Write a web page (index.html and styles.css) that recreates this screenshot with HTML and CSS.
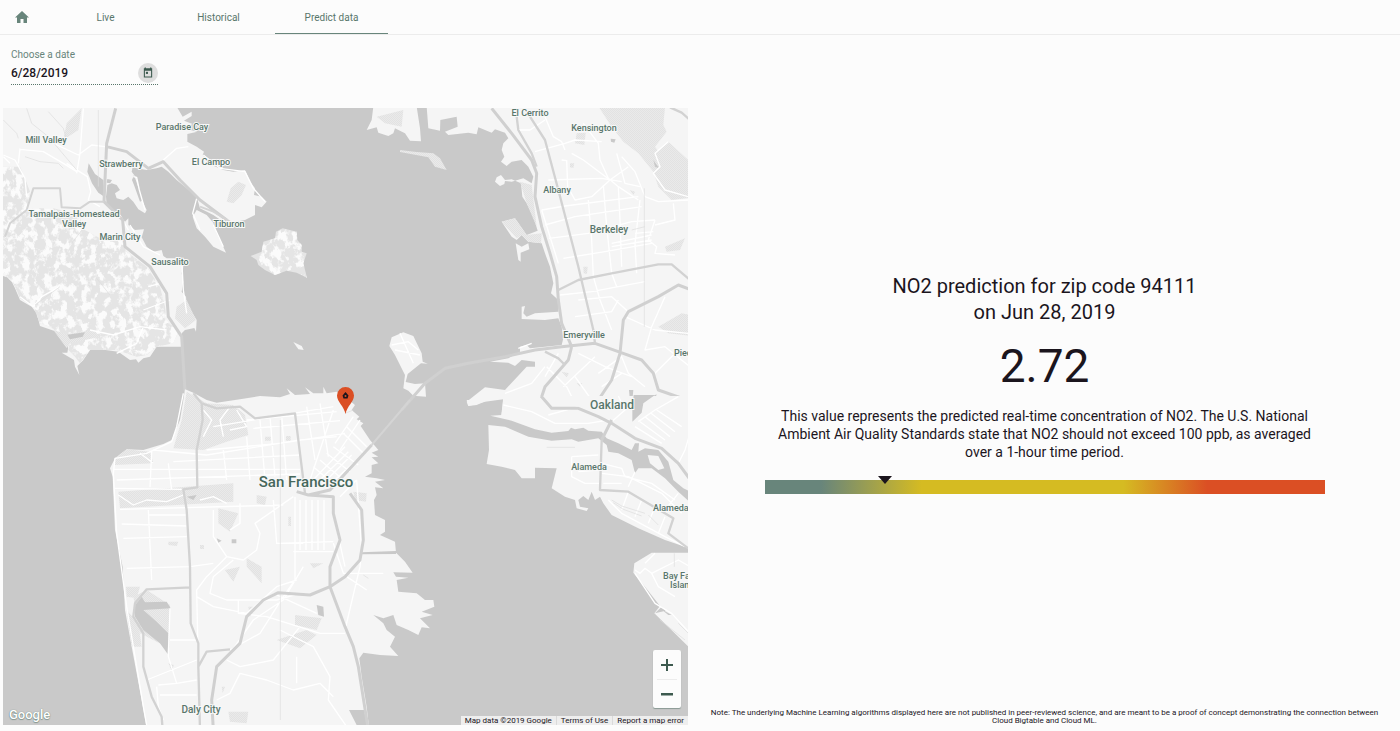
FILE: index.html
```html
<!DOCTYPE html>
<html lang="en">
<head>
<meta charset="utf-8">
<meta name="viewport" content="width=device-width, initial-scale=1">
<title>Predict data</title>
<link rel="stylesheet" href="styles.css">
</head>
<body>
<header class="topbar">
  <nav class="tabs" aria-label="Main">
    <a class="home" href="#home" aria-label="Home"><svg viewBox="0 0 14 12" aria-hidden="true"><path d="M7 0 0 6.500h2V12h3.500V8h3v4H12V6.500h2z"/></svg></a>
    <a class="tab" href="#live">Live</a>
    <a class="tab" href="#historical">Historical</a>
    <a class="tab tab-active" href="#predict" aria-current="page">Predict data</a>
  </nav>
</header>
<form class="date-form">
  <label class="date-label" for="date">Choose a date</label>
  <div class="date-row">
    <input class="date-input" id="date" type="text" value="6/28/2019">
    <button class="date-button" type="button" aria-label="Open calendar"><svg viewBox="0 0 12 12" aria-hidden="true"><path fill-rule="evenodd" d="M1 1h1V0h1.500v1h5V0H10v1h1v11H1zM2.300 4v6.700h7.400V4z"/><path d="M3.500 5.200h2.500v2.500H3.500z"/></svg></button>
  </div>
</form>
<main class="content">
  <section class="map" aria-label="Map of the San Francisco Bay Area">
    <svg class="map-canvas" viewBox="3 108 685 617" role="img" aria-label="San Francisco Bay Area">
      <defs>
        <pattern id="dots" width="6" height="6" patternUnits="userSpaceOnUse"><path fill="#e2e2e2" d="M0 0h6v6H0z"/><path fill="#eaeaea" d="M0 0h3v3H0zM3 3h3v3H3z"/></pattern>
        <filter id="relief" x="0" y="0" width="100%" height="100%">
          <feTurbulence type="fractalNoise" baseFrequency=".045 .038" numOctaves="4" seed="8"/>
          <feColorMatrix values="0 0 0 0 .96  0 0 0 0 .96  0 0 0 0 .96  0 7 0 0 -3.300"/>
          <feComposite in2="SourceGraphic" operator="in" result="ridges"/>
          <feMerge><feMergeNode in="SourceGraphic"/><feMergeNode in="ridges"/></feMerge>
        </filter>
      </defs>
      <path class="water" d="M3 108h685v617H3z"/>
      <g transform="scale(.333333)">
        <!-- Marin -->
        <g transform="translate(0 300)">
          <path class="land" d="M0 20H530L548 50 575 35 575 48 552 62 578 72 552 85 592 95 562 102 562 125 590 140 612 155 608 165 635 195 670 210 700 215 735 210 750 245 765 265 762 285 785 290 800 305 785 322 765 315 765 345 735 360 690 368 665 362 640 345 600 325 590 290 560 265 530 240 505 215 485 200 470 205 440 210 410 205 398 200 395 215 410 235 418 270 430 310 440 330 435 340 415 328 400 305 385 290 370 300 350 295 345 280 360 270 350 255 335 250 322 255 318 290 320 315 340 330 360 345 375 365 385 355 385 375 405 390 432 388 425 412 440 440 460 455 485 450 490 468 500 475 545 475 550 500 545 520 550 545 545 575 558 590 560 615 575 635 590 660 588 695 583 684 555 690 545 700 545 740 470 740 450 770 430 775 415 788 408 778 390 780 355 755 300 748 270 750 250 780 232 798 238 825 225 800 222 780 185 758 202 758 205 740 195 715 170 695 120 678 110 640 95 620 60 600 45 565 30 535 0 525z"/>
          <path class="relief" d="M9 200 60 200 75 235 90 275 80 325 160 325 240 345 245 385 300 415 365 420 380 455 440 500 480 560 495 620 500 660 535 695 520 730 470 740 440 765 410 770 350 750 270 750 240 790 225 770 205 750 200 715 150 680 120 670 100 620 60 595 40 550 9 520z"/>
          <path class="park" d="M715 245 738 255 725 285 700 310 680 305 692 265zM200 703 160 690 200 745 210 730 300 710 280 690zM560 600 588 660 555 685 525 655 530 620zM200 70 245 25 235 90 190 120z"/>
          <path class="water" d="M266 190 285 222 310 240 313 290 295 278 276 250 262 215zM202 704 255 697 248 710 210 718zM322 237 336 240 330 250 320 248zM402 225 415 262 430 300 420 305 402 255 396 240z"/>
          <path class="land" d="M590 330 620 345 640 368 650 400 665 430 678 458 640 440 615 410 590 385 578 350z"/>
          <path class="relief" d="M848 385 890 395 892 420 905 435 905 455 920 460 910 490 921 533 890 518 860 512 825 525 795 510 775 495 770 480 752 468 785 455 790 425 825 415 828 395z"/>
          <path class="land" d="M880 726 905 738 911 750 895 748z"/>
          <path class="street" d="M10 165 45 180 75 235 80 290M60 145 55 190M60 148 130 155 190 190 230 215M150 125 235 165 275 135 315 140M230 220 240 160 250 25M200 190 262 230 272 275 265 300 300 320M10 170 30 190M490 180 530 145 565 140M610 165 660 205 735 215 760 265 795 305M640 375 670 440M590 295 578 340 600 390M400 230 410 232 418 270 435 330M390 375 430 440 480 465M545 475 550 570 560 640M360 345 385 390M60 590 100 620 125 590 180 560M270 690 340 705 420 680 500 690M430 630 510 600M445 560 480 550 500 590M350 760 410 730 430 680"/>
          <path class="minor-road" d="M80 25 95 70 145 110 230 210M10 60 50 100 55 115M75 170 120 185 175 190 190 205M145 35 190 85 200 120M215 430 250 385M290 535 330 585M105 615 180 560M295 30V260"/>
          <path class="highway" d="M347 25 320 130 312 305 368 360 375 440 450 500 500 580 505 650 545 710 555 870 600 900M320 140 380 155 445 205 490 185 540 240 600 300 680 360"/>
          <path class="road" d="M312 305 270 305 240 325 185 322 180 265 100 265 80 330 30 370 15 410M600 320 640 335 690 365"/>
        </g>
        <!-- East Bay, north -->
        <g transform="translate(1035 300)">
          <path class="land" d="M85 20 80 60 65 90 95 82 100 98 130 108 145 100 150 85 180 100 195 122 228 124 225 85 215 20zM245 20 250 85 285 92 286 60 335 50 338 80 300 95 310 105 370 98 395 103 400 82 440 98 450 88 480 98 490 115 475 130 470 150 478 170 468 185 485 198 500 185 530 180 550 200 565 230 560 250 535 235 500 245 480 243 478 252 465 258 450 245 455 232 468 225 480 240 500 238 528 250 532 290 545 310 565 350 578 392 545 405 510 355 470 365 500 410 515 420 530 405 550 425 590 430 600 460 615 500 625 550 618 580 640 600 640 635 570 640 545 650 535 640 540 618 530 620 530 657 600 660 640 655 650 680 655 715 650 735 600 740 555 745 545 735 525 740 525 755 490 775 435 785 490 788 510 798 530 780 570 785 570 800 545 800 480 870 420 862 365 905 370 918 420 905 475 898 468 950H1060V20z"/>
          <path class="land" d="M512 430 530 440 550 430 553 448 527 458 527 485 520 480z"/>
          <path class="park" d="M762 22H960L955 75 965 95 930 140 980 210 1060 245V290L980 300 940 260 925 215 880 160 835 125 800 80zM970 125 1030 180V250L965 220 930 160zM470 365 510 355 545 405 590 400 588 430 550 425 530 405 515 415zM525 245 560 255 575 380 545 310zM165 150 215 156 265 160 285 175 305 210 270 200 250 172 165 156zM95 50 175 30 170 80 120 70zM695 100 722 98 718 135 690 130zM940 680 1010 640 1060 650V710L970 700zM650 815 672 820 665 832zM695 850 712 850 705 860zM715 500 728 500 726 522 716 520zM675 190 688 190 685 204 675 202zM960 440 1020 415 1005 450 965 455zM855 270 870 275 865 285z"/>
          <path class="water" d="M797 116 812 118 808 128 798 125zM925 180 942 205 930 200zM852 870 865 870 862 900 855 905zM870 905 900 900 935 883 925 915 895 940H865z"/>
          <path class="land" d="M175 697 205 708 230 760 233 785 248 791 228 790 188 822 182 846 210 852 240 850 243 890 205 887 190 872 175 865 180 825 150 765 133 738 140 712z"/>
          <path class="street" d="M600 50 625 110 650 125 660 150M570 155 660 130 690 120 770 125M665 180 668 260 690 300 740 290 795 240 850 200M610 240 770 235 830 245M715 70 760 130 765 180 790 235 820 260 880 300M590 330 660 318 880 290M600 375 690 350 890 320M612 415 730 400 860 365 930 360M655 475 780 455 920 430M645 585 740 575 900 545M640 490 590 330M730 300 740 420 745 530 765 600 800 690M775 255 785 380 800 520 815 560M820 260 825 360 830 500M885 300 870 430 875 520M795 240 715 180 680 160M600 60 555 90 520 90M815 160 840 250 885 260M830 170 870 215 900 290 940 305 1030 300M930 360 910 420 935 440 930 460 990 465M800 430 920 405M800 440 920 420M870 400 925 395M985 310 990 360 930 375M970 125 930 160 945 200 925 220 960 270 1030 290M700 600 800 590 850 635M840 650 930 690 1030 700M760 820 830 770 850 820 900 860M700 760 780 800 860 830M690 830 740 900M770 860 830 820M960 590 920 680 900 750 960 740 1035 800M930 820 1000 750M600 830 640 760M655 860 750 770M605 800 665 860 700 930M480 880 560 850 600 800M690 650 800 635 820 600M650 180 665 182M520 745 560 730M140 735 190 725 220 750M150 750 225 765M165 700 205 790"/>
          <path class="minor-road" d="M898 265V680M860 390 900 380"/>
          <path class="highway" d="M440 25 500 100 560 180 575 220 570 290 590 380 615 460 635 530 640 600 650 670 680 740M170 930 240 850 300 805 370 790 480 770 570 750 650 740 750 730 820 755 890 780 925 820 940 870 1040 905M1040 570 1000 555 940 590 850 635 835 660 825 760 800 840 760 900M680 740 670 780 600 860 590 890 620 930"/>
          <path class="road strong" d="M515 50 520 90 560 160 575 200M555 50 600 120 640 270 700 500 745 690 750 730M640 570 700 540 800 520 940 493 980 493 1035 540M600 755 640 775 660 795M975 22 1010 38 1035 60"/>
        </g>
        <!-- Oakland and Alameda -->
        <g transform="translate(1035 1200)">
          <path class="land" d="M475-12 470 45 436 47 500 62 570 88 620 98 670 93 678 83 690 88 715 83 730 92 770 95 785 115 820 130 860 150 870 130 882 130 880 155 900 145 940 150 970 185 985 240 1015 265 1060 285V-12z"/>
          <path class="land" d="M430 75 480 80 550 110 620 122 680 118 700 125 760 115 785 135 790 155 820 160 860 180 870 220 880 205 920 205 960 235 1000 275 1060 330V450L1020 440 960 420 880 385 800 345 775 310 765 290 750 300 740 275 730 300 715 288 700 300 705 320 730 325 725 333 695 325 690 300 660 290 620 265 635 205 570 203 570 235 530 235 510 210 470 200 425 192 432 150zM908 165 940 168 958 205 940 210 915 190zM920 458H1060V770L1000 710 928 640 945 618 900 560 865 518 868 490zM365 0 370 18 395 15 430 0z"/>
          <path class="water" d="M866-15 930-15 895 10 890 38 862 65 862 30zM930 640 950 620 962 632zM945 625 980 645 970 645z"/>
          <path class="street" d="M475 15 560 35 630 70 730 70 790 60M610 45 700 20M820-12 840 30 800 65M880 65 930 30 1000-10M870 80 950 130M885 65 960 120M900 50 975 110M918 40 990 95M935 30 1010 80M1000 190 1020 150 1035 100M680 170 680 230 720 250 765 250M680 170 760 165M700 215 760 210M770 190 830 205 840 230 920 250 990 300M770 220 850 230 950 280 1010 340M775 250 830 250M790 300 830 340 960 410 1020 440M850 275 830 330M890 300 870 350M930 320 910 370M960 350 940 400M870 215 850 260M1000 280 960 330M870 510 885 520 900 505 920 520 1000 480 1035 500M870 520 930 610 980 640 1035 700M920 520 940 560 990 590M930 460 900 490"/>
          <path class="minor-road" d="M605 142H690M800 300 830 318 900 340M805 308 835 328 890 348M910 345 940 375M988 460V500M945 660 1020 720M1000 670 1030 700"/>
          <path class="highway" d="M588-12 620 25 700 25 760 50 800 70 870 115 950 145 1000 190 1040 245M800 60 770 120"/>
          <path class="road strong" d="M770 120 765 270 850 275 985 355 970 400 1030 445"/>
        </g>
        <!-- San Francisco -->
        <g transform="translate(0 1200)">
          <path class="land" d="M555-32 580-22 620 0 650 8 720-2 780-12 840-8 870-18 860-35 885-15 930-18 915-38 940-20 970-20 970-40 980-20 1010-25 1035-10 1065 15 1055 30 1078 50 1070 58 1090 70 1082 78 1110 120 1135 150 1115 158 1135 170 1115 172 1135 190 1115 195 1115 220 1095 230 1130 235 1155 240 1125 245 1150 265 1125 262 1130 285 1122 300 1125 345 1155 360 1155 395 1140 405 1185 425 1188 458 1195 465 1215 485 1238 518 1180 517 1188 530 1225 533 1190 540 1195 575 1250 580 1275 600 1300 600 1303 620 1265 635 1298 645 1260 655 1290 685 1265 682 1255 705 1225 690 1190 675 1180 645 1150 655 1120 645 1150 670 1160 690 1185 710 1170 740 1195 768 1140 765 1090 758 1078 775 1085 830 1100 920 1108 990H441L425 900 395 740 375 630 368 500 345 390 338 230 330 205 345 175 380 148 430 150 490 132 515 120 540 60 550 0z"/>
          <path class="park" d="M560-25 620 10 700 15 735 45 745 105 680 125 610 150 520 145 545 60zM355 275 700 250 700 305 360 325zM345 175 380 148 450 155 460 190 345 195zM400 590 440 570 510 615 508 745 420 700zM380 630 415 670 425 740 395 740zM378 560 420 560 410 595 380 590zM655 325 715 340 690 395 655 370zM740 475 785 500 785 550 740 500zM885 645 965 655 950 690 885 675zM830 720 920 690 950 705 900 745zM770 285 800 290 795 315 770 310zM675 510 720 500 700 545zM795 110 812 110 812 122 795 122zM858 108 872 108 872 122 858 122zM865 350 873 350 873 378 865 378zM930 490 970 490 940 505zM505 790 522 795 515 812zM1060 275 1100 280 1098 305 1065 300zM685 935 745 935 740 970 690 965zM745 620 770 620 750 650zM665 860 675 860 668 880zM505 425 535 425 530 438 505 435zM600 435 612 435 612 447 600 447z"/>
          <path class="water" d="M425 590 435 607 500 605 512 625 430 630 470 665 505 700 503 762 480 730 430 690 405 650 402 620zM650 415 665 422 655 428zM695 418 709 418 709 430 695 430zM950 615 970 620 972 650 955 645zM1085 457 1188 453 1188 462 1085 463zM1047 930 1092 930 1104 985 1075 985zM560 290 590 285 580 300z"/>
          <path class="street" d="M340 208 900 208M350 240 900 222M345 265 545 268M460 150 620 165 900 120 1010 110M520 185 900 165M620 150 840 130 1035 100M640 80 1000 20M740 60 1010 35M760 85 1020 62M360 328 850 315M365 372 560 378M370 415 560 410M380 505 570 500 640 490M445 330 455 540M445 345 560 345M505 190 515 270M455 155 450 262M670 150 680 240M740 110 750 240M780 60 795 240M810 50 825 230M845 45 860 240M920 20 945 180M960 10 985 170M1000 30 930 240M550-20 530 80 515 125 440 160 345 175 340 220 350 400 380 620 430 920 440 975M640 330 640 410 680 470 620 530 590 570 595 800M680 470 730 480 770 450 780 400 765 370 880 290M820 300 830 430 910 430M885 290V540L850 590 780 700 690 750M900 300V450M918 300V450M936 300V450M954 300V450M972 300V450M830 430 1000 425M880 455H1000M720 310 720 370 690 390M590 590 640 620 740 640 830 560 890 540M700 480 640 530 630 580 680 600 830 600 900 580M690 760 760 660 850 600 910 500M715 600 715 640 800 650 960 700 1035 700M820 580 950 640M840 690 940 740 990 830 985 900 1040 980M680 780 720 800 820 780 900 680M650 900 690 880 720 820 800 840 880 870 960 850 1000 890M890 770 890 850M510 720 590 720M510 625 505 770 530 850M440 840 590 780M475 855 530 850 590 840M470 860 475 920 490 960M480 885 590 885M1070 240 1085 450 1080 500 1035 690M1000 340 1035 500M1000 430 1030 520 1150 520M1040 530 1100 570M1020 290 1070 240M930 250 1035 140M950 250 1045 155M965 255 1055 165M980 262 1070 180M940 200 1010 260M960 180 1030 240M980 160 1050 215M1000 140 1075 195M1030 100 1090 160M1040 80 1100 140M1020 150 1080 60M1005 130 1060 50M610 30 635 60 610 110M690 20 660 60 670 110M710 30 740 80 690 90M355 285 400 315 440 300 500 305 550 285M600 300 640 290 680 310M420 160 460 190"/>
          <path class="minor-road" d="M841 60V960M1035 40 1060 30M1090 525 1105 535"/>
          <path class="road strong" d="M580-20 605 10 608 60 590 150 592 262 550 268 560 330 570 500 572 670 595 730 595 800 600 990M605 10 650 25 720 20 765 55 885 40 915 280M572 562 440 568 405 610 400 650 430 700 430 800 455 890 485 950 488 990M595 800 620 755 690 748"/>
          <path class="highway" d="M890 275 925 285 1000 290 1000 340 1020 420 990 500 990 560 1035 680 1060 740 1075 800 1105 990M640 990 635 900 650 800 720 730 740 650 790 600 835 578 930 585 990 560 1035 530 1080 480 1090 420 1085 330 1050 280M925 285 990 270 1115 135"/>
          <path class="road" d="M1115 135 1230 0"/>
        </g>
      </g>
      <g class="labels">
        <text x="182" y="130">Paradise Cay</text><text x="46" y="143">Mill Valley</text>
        <text x="121" y="167">Strawberry</text><text x="211" y="165">El Campo</text>
        <text x="74" y="217">Tamalpais-Homestead</text><text x="74" y="227">Valley</text>
        <text x="120" y="240">Marin City</text><text x="170" y="265">Sausalito</text><text x="229" y="227">Tiburon</text>
        <text x="530" y="116">El Cerrito</text><text x="594" y="131">Kensington</text><text x="557" y="193">Albany</text>
        <text class="town" x="609" y="233">Berkeley</text><text x="584" y="338">Emeryville</text>
        <text class="city" x="612" y="409">Oakland</text><text x="589" y="470">Alameda</text>
        <text class="town" x="201" y="713">Daly City</text>
        <g class="clipped"><text x="674" y="356">Piedmont</text><text x="653" y="511">Alameda</text><text x="663" y="579">Bay Farm</text><text x="670" y="588">Island</text></g>
        <text class="metro" x="306" y="487">San Francisco</text>
      </g>
      <g class="pin"><path d="M345.500 414C344 406 337 402 337 395.500a8.500 8.500 0 0 1 17 0C354 402 347 406 345.500 414z"/><path class="pin-mark" d="M345.500 392 348.500 395.500 347.500 398.500H343.500L342.500 395.500z"/><circle class="pin-eye" cx="345.500" cy="396" r="1"/></g>
    </svg>
    <span class="google">Google</span>
    <div class="zoom">
      <button class="zoom-button" type="button" aria-label="Zoom in"><svg viewBox="0 0 12 12" aria-hidden="true"><path d="M5 0h2v5h5v2H7v5H5V7H0V5h5z"/></svg></button>
      <button class="zoom-button" type="button" aria-label="Zoom out"><svg viewBox="0 0 12 12" aria-hidden="true"><path d="M0 5h12v2.500H0z"/></svg></button>
    </div>
    <div class="credits"><span>Map data ©2019 Google</span><a href="#terms">Terms of Use</a><a href="#report">Report a map error</a></div>
  </section>
  <section class="panel">
    <div class="prediction">
      <h1 class="title">NO2 prediction for zip code 94111<br>on Jun 28, 2019</h1>
      <p class="value">2.72</p>
      <p class="about">This value represents the predicted real-time concentration of NO2. The U.S. National Ambient Air Quality Standards state that NO2 should not exceed 100 ppb, as averaged over a 1-hour time period.</p>
      <div class="gauge"><span class="marker" style="left:21.500%"></span></div>
    </div>
    <p class="note">Note: The underlying Machine Learning algorithms displayed here are not published in peer-reviewed science, and are meant to be a proof of concept demonstrating the connection between Cloud Bigtable and Cloud ML.</p>
  </section>
</main>
</body>
</html>
```
FILE: styles.css
```css
* { box-sizing: border-box; }
body { margin: 0; min-height: 100vh; background: #fcfcfc; color: #1b151d; font-family: Roboto, "Liberation Sans", sans-serif; }
button { border: 0; padding: 0; cursor: pointer; }

.topbar { border-bottom: 1px solid #ececec; }
.tabs { display: flex; height: 34px; }
.home, .tab { display: flex; align-items: center; justify-content: center; text-decoration: none; color: #58766b; }
.home { width: 49px; padding-right: 5px; }
.home svg { width: 14px; height: 12px; fill: #68857b; }
.tab { width: 113px; padding-top: 2px; font-size: 10px; border-bottom: 1px solid transparent; }
.tab-active { border-bottom-color: #68857b; }

.date-form { width: 147px; margin: 14px 0 23px 11px; }
.date-label { display: block; font-size: 10px; line-height: 12px; color: #68857b; }
.date-row { display: flex; align-items: center; height: 24px; border-bottom: 1px dotted #58766b; }
.date-input { flex: 1; min-width: 0; border: 0; padding: 0; background: none; font: 500 12px/16px Roboto, sans-serif; color: #1b151d; outline: 0; }
.date-button { display: grid; place-items: center; width: 20px; height: 20px; border-radius: 50%; background: #dedede; }
.date-button svg { width: 10px; height: 11px; fill: #3d5a4f; }

.content { display: grid; grid-template-columns: 685fr 712fr; padding: 0 0 5px 3px; }

.map { position: relative; overflow: hidden; }
.map-canvas { display: block; width: 100%; }
.water { fill: #c9c9c9; }
.land { fill: #f5f5f5; }
.park { fill: url(#dots); }
.relief { fill: #e5e5e5; filter: url(#relief); }
.street, .minor-road, .road, .highway { fill: none; stroke-linejoin: round; }
.street { stroke: #fff; stroke-width: 4px; }
.minor-road { stroke: #dcdcdc; stroke-width: 2px; }
.road { stroke: #d4d4d4; stroke-width: 6px; }
.strong { stroke: #d2d2d2; stroke-width: 7px; }
.highway { stroke: #d0d0d0; stroke-width: 9px; }
.labels { font-size: 9px; font-weight: 500; fill: #58766b; stroke: #f8f8f8; stroke-width: 2px; paint-order: stroke; text-anchor: middle; }
.labels .town { font-size: 10px; }
.labels .city { font-size: 12px; }
.labels .metro { font-size: 15px; fill: #45675b; }
.labels .clipped { text-anchor: start; }
.pin { fill: #db4f24; }
.pin-mark { fill: #1b151d; }
.pin-eye { fill: #db4f24; }

.google { position: absolute; left: 6px; bottom: 2px; font-size: 13px; line-height: 16px; font-weight: 500; color: #fff; text-shadow: 0 0 1px #58766b, 0 1px 1px #8a9a94; }
.zoom { position: absolute; right: 7px; bottom: 17px; width: 28px; background: #fcfcfc; border-radius: 2px; box-shadow: 0 1px 1px #8a9a94; padding: 0 4px; }
.zoom-button { display: grid; place-items: center; width: 100%; height: 29px; background: none; }
.zoom-button + .zoom-button { border-top: 1px solid #ececec; }
.zoom svg { width: 12px; height: 12px; fill: #3d5a4f; }
.credits { position: absolute; right: 0; bottom: 0; display: flex; background: #eee; font-size: 8px; line-height: 9px; }
.credits > * { padding: 0 4px; color: #1b151d; text-decoration: none; }
.credits > * + * { border-left: 1px solid #dadada; }

.panel { display: flex; flex-direction: column; text-align: center; padding: 0 12px 0 13px; }
.prediction { flex: 1; display: flex; flex-direction: column; justify-content: center; width: 100%; max-width: 560px; margin: 0 auto; padding-bottom: 50px; }
.title { margin: 0; font-size: 20px; line-height: 26px; font-weight: 400; }
.value { margin: 14px 0; font-size: 46px; line-height: 54px; }
.about { margin: 0; font-size: 14px; line-height: 18px; }
.gauge { position: relative; height: 14px; margin-top: 19px; background: linear-gradient(90deg, #68857b 10%, #d5bb22 28%, #d5bb22 64%, #db4f24 79%); }
.marker { position: absolute; top: -4px; margin-left: -7px; border: solid transparent; border-width: 8px 7px 0; border-top-color: #1b151d; }
.note { margin: 0; font-size: 8px; line-height: 8px; }
```
